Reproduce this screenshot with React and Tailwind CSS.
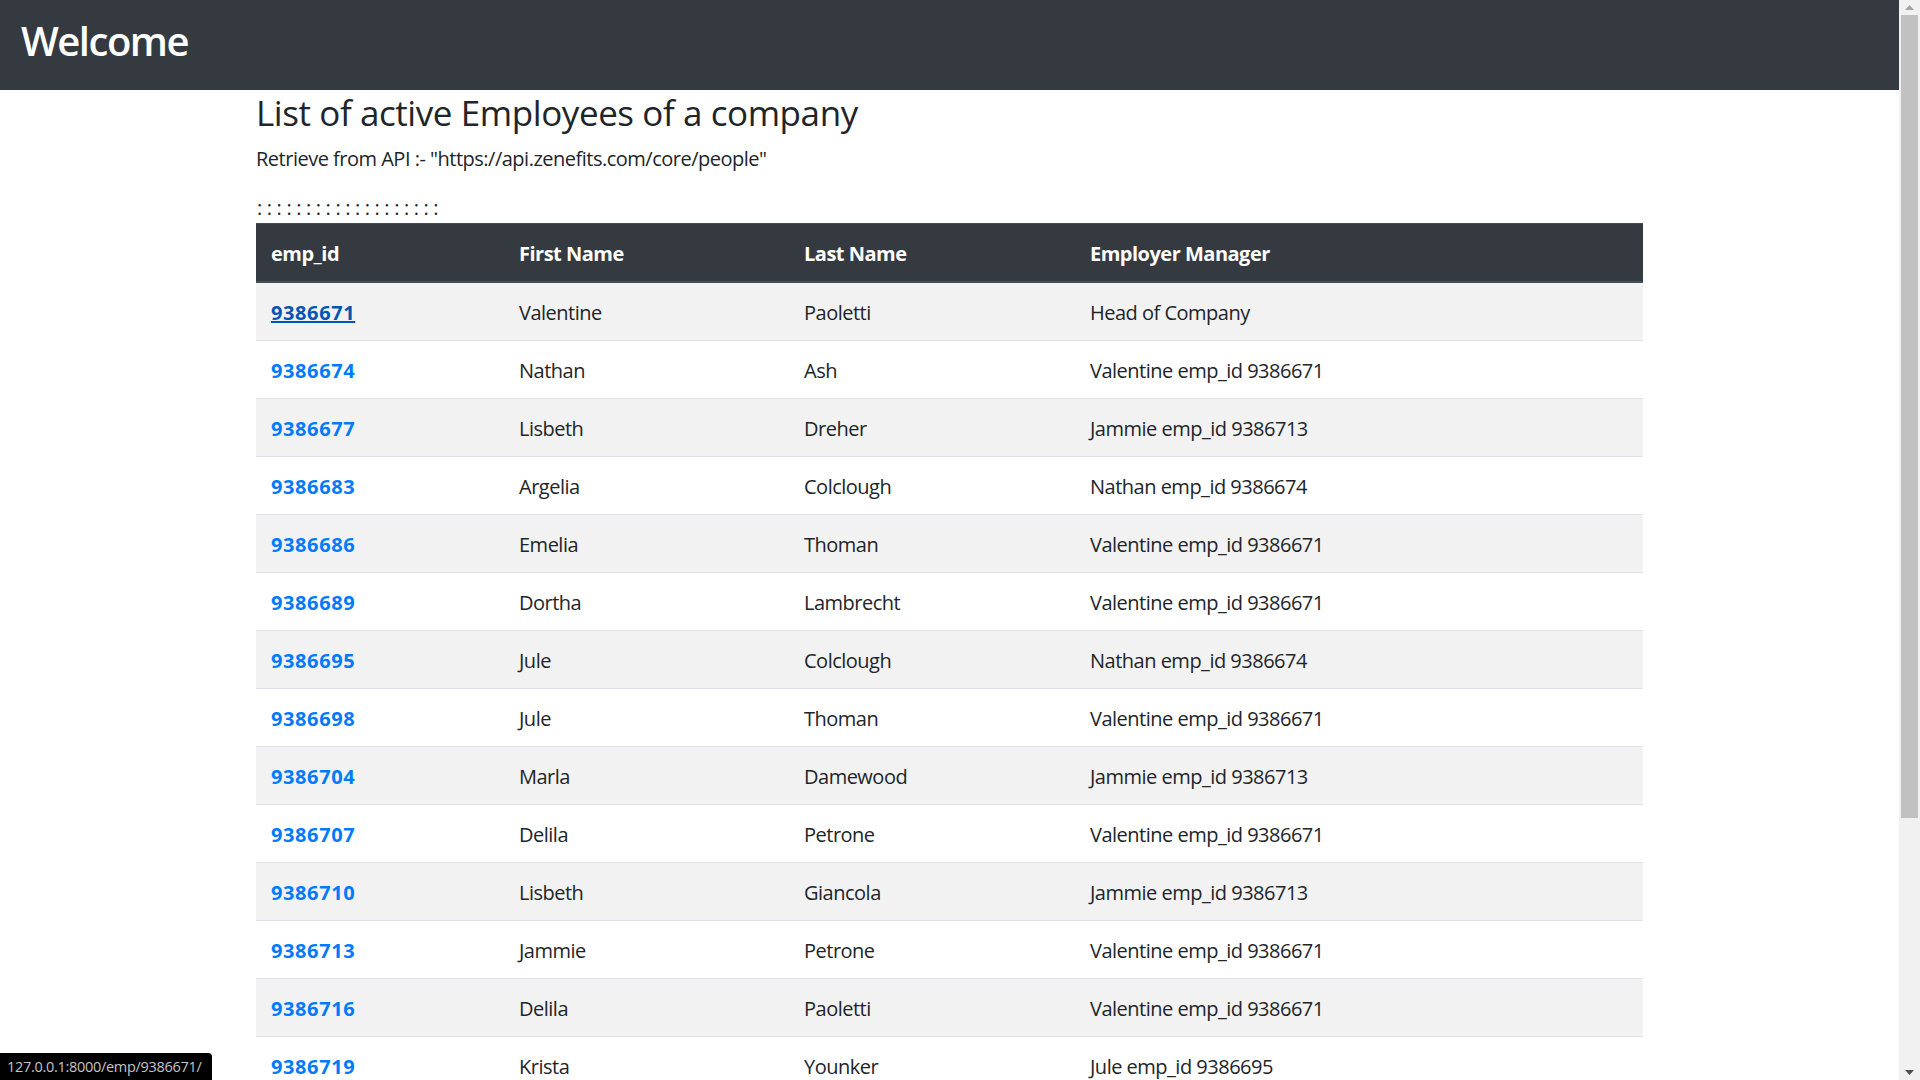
const EMPLOYEES = [
  ['9386671', 'Valentine', 'Paoletti', 'Head of Company'],
  ['9386674', 'Nathan', 'Ash', 'Valentine emp_id 9386671'],
  ['9386677', 'Lisbeth', 'Dreher', 'Jammie emp_id 9386713'],
  ['9386683', 'Argelia', 'Colclough', 'Nathan emp_id 9386674'],
  ['9386686', 'Emelia', 'Thoman', 'Valentine emp_id 9386671'],
  ['9386689', 'Dortha', 'Lambrecht', 'Valentine emp_id 9386671'],
  ['9386695', 'Jule', 'Colclough', 'Nathan emp_id 9386674'],
  ['9386698', 'Jule', 'Thoman', 'Valentine emp_id 9386671'],
  ['9386704', 'Marla', 'Damewood', 'Jammie emp_id 9386713'],
  ['9386707', 'Delila', 'Petrone', 'Valentine emp_id 9386671'],
  ['9386710', 'Lisbeth', 'Giancola', 'Jammie emp_id 9386713'],
  ['9386713', 'Jammie', 'Petrone', 'Valentine emp_id 9386671'],
  ['9386716', 'Delila', 'Paoletti', 'Valentine emp_id 9386671'],
  ['9386719', 'Krista', 'Younker', 'Jule emp_id 9386695'],
]

const HEADERS = [
  ['emp_id', 'w-[248px]'],
  ['First Name', 'w-[285px]'],
  ['Last Name', 'w-[286px]'],
  ['Employer Manager', ''],
]

function Scrollbar() {
  return (
    <div className="w-[21px] h-full bg-[#f1f1f1] flex flex-col items-center shrink-0">
      <div className="h-[15px] flex items-center justify-center">
        <svg width="9" height="5" viewBox="0 0 9 5"><path d="M0 5 L4.5 0 L9 5 Z" fill="#a3a3a3" /></svg>
      </div>
      <div className="w-[17px] h-[803px] bg-[#c1c1c1]" />
      <div className="flex-1" />
      <div className="h-[15px] flex items-center justify-center">
        <svg width="9" height="5" viewBox="0 0 9 5"><path d="M0 0 L9 0 L4.5 5 Z" fill="#505050" /></svg>
      </div>
    </div>
  )
}

export default function App() {
  return (
    <div className="relative flex w-[1920px] h-[1080px] overflow-hidden bg-white text-[#212529] font-['Open_Sans',sans-serif]">
      <div className="flex-1 flex flex-col overflow-hidden">
        <nav className="h-[90px] shrink-0 bg-[#343a40] px-[21px] pt-[17px]">
          <span className="text-white text-[40px] leading-[48px] font-semibold tracking-[-1.5px]">Welcome</span>
        </nav>

        <div className="w-[1387px] mx-auto">
          <h2 className="mt-[2px] text-[35px] leading-[42px] font-medium tracking-[-0.42px]">List of active Employees of a company</h2>
          <p className="mt-[10px] text-[20px] leading-[30px] tracking-[-0.5px]">
            Retrieve from API :- "https://api.zenefits.com/core/people"
          </p>
          <div className="mt-[19px] flex text-[20px] leading-[30px] pl-[1px]">
            {Array.from({ length: 19 }).map((_, i) => (
              <span key={i} className="w-[9.8px]">:</span>
            ))}
          </div>

          <table className="w-full border-separate border-spacing-0 text-[20px] leading-[27px] tracking-[-0.5px]">
            <thead>
              <tr className="bg-[#343a40] text-white">
                {HEADERS.map(([h, w]) => (
                  <th
                    key={h}
                    className={`${w} text-left font-bold px-[15px] pt-[16px] pb-[14px] border-t border-b-2 border-[#454d55]`}
                  >
                    {h}
                  </th>
                ))}
              </tr>
            </thead>
            <tbody>
              {EMPLOYEES.map((e, i) => {
                const cell = `px-[15px] pt-[16px] pb-[14px] ${i === 0 ? '' : 'border-t border-[#dee2e6]'}`
                return (
                  <tr key={e[0]} className={i % 2 === 0 ? 'bg-[#f2f2f2]' : 'bg-white'}>
                    <td className={cell}>
                      <a
                        href={`/emp/${e[0]}/`}
                        className={`font-bold tracking-[0.6px] ${i === 0 ? 'text-[#0056b3] underline' : 'text-[#007bff]'}`}
                      >
                        {e[0]}
                      </a>
                    </td>
                    <td className={cell}>{e[1]}</td>
                    <td className={cell}>{e[2]}</td>
                    <td className={cell}>{e[3]}</td>
                  </tr>
                )
              })}
            </tbody>
          </table>
        </div>
      </div>

      <Scrollbar />

      <div className="absolute left-0 bottom-0 w-[212px] h-[27px] bg-black rounded-tr-[4px] pl-[7px] text-[14.5px] leading-[27px] tracking-[-0.3px] text-[#c4c4c4] whitespace-nowrap overflow-hidden">
        127.0.0.1:8000/emp/9386671/
      </div>
    </div>
  )
}
